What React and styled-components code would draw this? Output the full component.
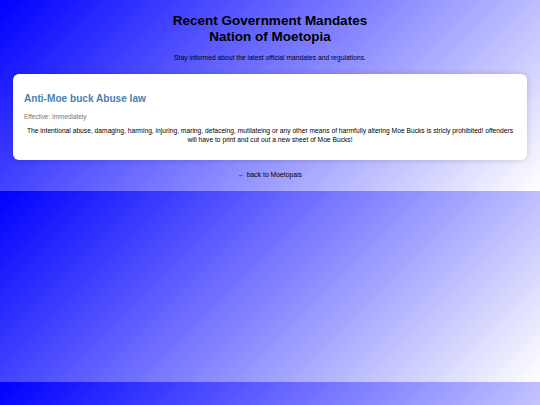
import React from "react";
import styled, { createGlobalStyle } from "styled-components";

const GlobalStyle = createGlobalStyle`
  body {
    margin: 0;
    font-family: "Liberation Sans", Arial, sans-serif;
    background: linear-gradient(135deg, #0000ff 0%, #ffffff 100%);
    color: #000;
  }
`;

const Page = styled.div`
  padding: 13px 13px 12px;
`;

const Header = styled.header`
  text-align: center;
`;

const Title = styled.h1`
  margin: 0;
  font-size: 13.5px;
  line-height: 16px;
  font-weight: bold;
`;

const Lead = styled.p`
  margin: 9px 0 0;
  font-size: 6.75px;
  line-height: 8px;
`;

const List = styled.main`
  display: flex;
  flex-direction: column;
  gap: 12px;
  margin-top: 12px;
`;

const Card = styled.article`
  background: #fff;
  border-radius: 6px;
  padding: 19px 11px 16px;
  box-shadow: 0 0 6px rgba(0, 0, 0, 0.16);
`;

const CardTitle = styled.h2`
  margin: 0;
  font-size: 10.1px;
  line-height: 12px;
  font-weight: bold;
  color: #4682b4;
`;

const Effective = styled.p`
  margin: 8px 0 0;
  font-size: 6.4px;
  line-height: 8px;
  color: #777;
`;

const Body = styled.p`
  margin: 5px 0 0;
  font-size: 6.7px;
  line-height: 9px;
  text-align: center;
`;

const Back = styled.a`
  display: block;
  margin-top: 10px;
  text-align: center;
  font-size: 6.8px;
  line-height: 9px;
  color: #000;
  text-decoration: none;
`;

const mandates = [
  {
    title: "Anti-Moe buck Abuse law",
    effective: "Immediately",
    text:
      "The intentional abuse, damaging, harming, injuring, maring, defaceing, mutilateing or any other means of harmfully altering Moe Bucks is stricly prohibited! offenders will have to print and cut out a new sheet of Moe Bucks!",
  },
];

export default function App() {
  return (
    <>
      <GlobalStyle />
      <Page>
        <Header>
          <Title>
            Recent Government Mandates
            <br />
            Nation of Moetopia
          </Title>
          <Lead>Stay informed about the latest official mandates and regulations.</Lead>
        </Header>
        <List>
          {mandates.map((m) => (
            <Card key={m.title}>
              <CardTitle>{m.title}</CardTitle>
              <Effective>Effective: {m.effective}</Effective>
              <Body>{m.text}</Body>
            </Card>
          ))}
        </List>
        <Back href="#">← back to Moetopais</Back>
      </Page>
    </>
  );
}
